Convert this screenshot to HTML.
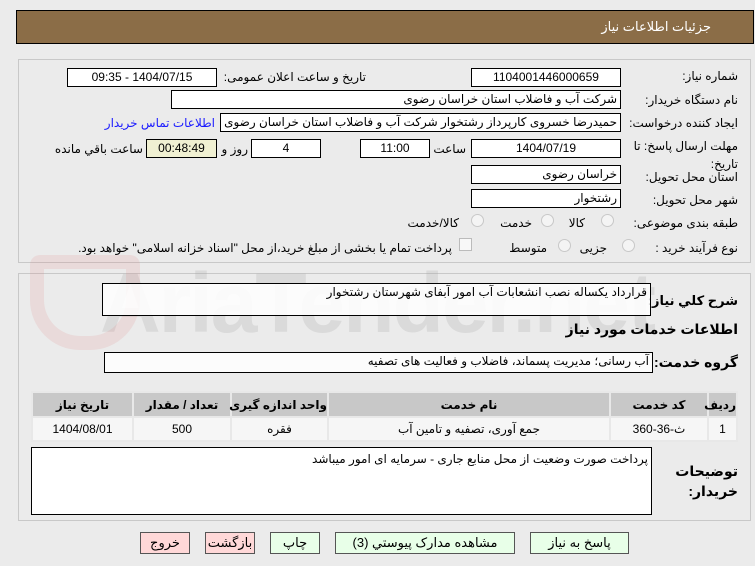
<!DOCTYPE html>
<html><head><meta charset="utf-8"><style>
*{margin:0;padding:0;box-sizing:border-box}
body{width:755px;height:566px;background:#ebebeb;font-family:"Liberation Sans","DejaVu Sans",sans-serif;font-size:12px;color:#000;position:relative;overflow:hidden;direction:rtl}
.a{position:absolute;white-space:nowrap}
.in{position:absolute;background:#fff;border:1px solid #000;height:19px;line-height:17px;padding:0 3px;white-space:nowrap;overflow:hidden}
.c{text-align:center}
.lb{position:absolute;white-space:nowrap;text-align:right}
.b{font-weight:bold}
.btn{position:absolute;height:22px;border:1px solid #555;line-height:20px;text-align:center;background:#e8ffe8;font-size:13px}
.pink{background:#ffd8d8}
.rad{position:absolute;width:13px;height:13px;border-radius:50%;border:1px solid #c8c8c8;background:#f4f4f4}
td{border:2px solid #e8e8e8;text-align:center;font-size:12px}
</style></head><body>
<div class="a" style="left:16px;top:10px;width:738px;height:34px;background:#8b6d47;border:1px solid #000"></div>
<div class="a" style="right:44px;top:19px;color:#fff;font-size:13px">جزئیات اطلاعات نیاز</div>

<div class="a" style="left:18px;top:59px;width:733px;height:204px;border:1px solid #c8c8c8"></div>
<div class="a" style="left:18px;top:273px;width:733px;height:248px;border:1px solid #c8c8c8"></div>

<div class="a" style="left:100px;top:255px;font-size:84px;font-weight:bold;color:rgba(160,160,160,0.22);direction:ltr;letter-spacing:-2px">AriaTender.net</div>
<div class="a" style="left:30px;top:255px;width:110px;height:95px;border:14px solid rgba(220,120,120,0.15);border-radius:10px 10px 50px 50px"></div>

<div class="lb" style="right:17px;top:69px">شماره نیاز:</div>
<div class="in c" style="left:471px;top:68px;width:150px">1104001446000659</div>
<div class="lb" style="right:389px;top:70px">تاریخ و ساعت اعلان عمومی:</div>
<div class="in c" style="left:67px;top:68px;width:150px">1404/07/15 - 09:35</div>

<div class="lb" style="right:17px;top:93px">نام دستگاه خریدار:</div>
<div class="in" style="left:171px;top:90px;width:450px">شرکت آب و فاضلاب استان خراسان رضوی</div>

<div class="lb" style="right:17px;top:116px">ایجاد کننده درخواست:</div>
<div class="in" style="left:220px;top:113px;width:401px">حمیدرضا خسروی کارپرداز  رشتخوار  شرکت آب و فاضلاب استان خراسان رضوی</div>
<div class="lb" style="right:540px;top:116px;color:#1a1aff">اطلاعات تماس خریدار</div>

<div class="lb" style="right:17px;top:137px;line-height:18px">مهلت ارسال پاسخ: تا<br>تاریخ:</div>
<div class="in c" style="left:471px;top:139px;width:150px">1404/07/19</div>
<div class="lb" style="right:289px;top:142px">ساعت</div>
<div class="in c" style="left:360px;top:139px;width:70px">11:00</div>
<div class="in c" style="left:251px;top:139px;width:70px">4</div>
<div class="lb" style="right:507px;top:142px">روز و</div>
<div class="in c" style="left:146px;top:139px;width:71px;background:#f0f0d2">00:48:49</div>
<div class="lb" style="right:612px;top:142px">ساعت باقي مانده</div>

<div class="lb" style="right:17px;top:170px">استان محل تحویل:</div>
<div class="in" style="left:471px;top:165px;width:150px">خراسان رضوی</div>
<div class="lb" style="right:17px;top:193px">شهر محل تحویل:</div>
<div class="in" style="left:471px;top:189px;width:150px">رشتخوار</div>

<div class="lb" style="right:17px;top:216px">طبقه بندی موضوعی:</div>
<div class="rad" style="left:601px;top:214px"></div><div class="lb" style="right:170px;top:216px">کالا</div>
<div class="rad" style="left:541px;top:214px"></div><div class="lb" style="right:223px;top:216px">خدمت</div>
<div class="rad" style="left:471px;top:214px"></div><div class="lb" style="right:296px;top:216px">کالا/خدمت</div>

<div class="lb" style="right:17px;top:241px">نوع فرآیند خرید :</div>
<div class="rad" style="left:622px;top:239px"></div><div class="lb" style="right:148px;top:241px">جزیی</div>
<div class="rad" style="left:558px;top:239px"></div><div class="lb" style="right:208px;top:241px">متوسط</div>
<div class="a" style="left:459px;top:238px;width:13px;height:13px;border:1px solid #bbb;background:#f8f8f8"></div>
<div class="lb" style="right:303px;top:241px">پرداخت تمام یا بخشی از مبلغ خرید،از محل "اسناد خزانه اسلامی" خواهد بود.</div>

<div class="lb b" style="right:17px;top:293px;font-size:13px">شرح کلي نیاز:</div>
<div class="in" style="left:102px;top:283px;width:549px;height:33px;background:rgba(255,255,255,0.85)">قرارداد یکساله نصب انشعابات آب امور آبفای شهرستان رشتخوار</div>
<div class="lb b" style="right:17px;top:321px;font-size:14px">اطلاعات خدمات مورد نیاز</div>
<div class="lb b" style="right:17px;top:354px;font-size:14px">گروه خدمت:</div>
<div class="in" style="left:104px;top:352px;width:549px;height:21px;background:rgba(255,255,255,0.85)">آب رسانی؛ مدیریت پسماند، فاضلاب و فعالیت های تصفیه</div>

<table class="a" style="left:31px;top:391px;width:707px;height:51px;border-collapse:collapse;border:1px solid #c8c8c8;background:#f0f0f0;table-layout:fixed">
<tr style="height:25px;background:#c8c8c8;font-weight:bold"><td style="width:29px">ردیف</td><td style="width:98px">کد خدمت</td><td>نام خدمت</td><td style="width:97px">واحد اندازه گیری</td><td style="width:98px">تعداد / مقدار</td><td style="width:101px">تاریخ نیاز</td></tr>
<tr style="background:#f6f6f6"><td>1</td><td>ث-36-360</td><td>جمع آوری، تصفیه و تامین آب</td><td>فقره</td><td>500</td><td>1404/08/01</td></tr>
</table>

<div class="in" style="left:31px;top:447px;width:621px;height:68px;line-height:22px">پرداخت صورت وضعیت از محل منابع جاری - سرمایه ای امور میباشد</div>
<div class="lb b" style="right:17px;top:461px;font-size:14px;line-height:20px">توضیحات<br>خریدار:</div>

<div class="btn" style="left:530px;top:532px;width:99px">پاسخ به نیاز</div>
<div class="btn" style="left:335px;top:532px;width:180px">مشاهده مدارک پیوستي (3)</div>
<div class="btn" style="left:270px;top:532px;width:50px">چاپ</div>
<div class="btn pink" style="left:205px;top:532px;width:50px">بازگشت</div>
<div class="btn pink" style="left:140px;top:532px;width:50px">خروج</div>
</body></html>
